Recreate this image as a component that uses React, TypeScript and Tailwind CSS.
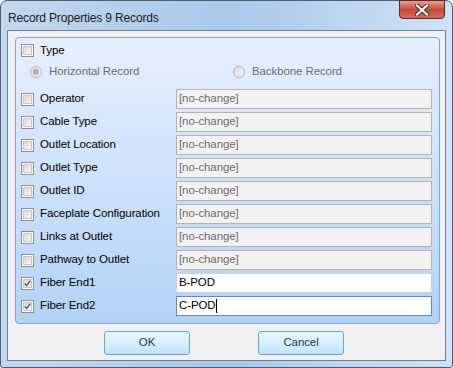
import React from "react";

const font = { fontFamily: '"Liberation Sans", Arial, sans-serif' };

function Check({ checked }: { checked?: boolean }) {
  return (
    <div className="w-[13px] h-[13px] shrink-0 border border-[#8f8f8f] bg-white p-[1px]">
      <div className="w-full h-full bg-gradient-to-br from-[#d9d9d9] to-[#f5f5f5] border border-[#c7c7c7] flex items-center justify-center">
        {checked && (
          <svg width="9" height="9" viewBox="0 0 9 9">
            <path d="M1 4.5 L3.5 7 L8 1" fill="none" stroke="#4b5f98" strokeWidth="1.8" />
          </svg>
        )}
      </div>
    </div>
  );
}

function Radio({ dot }: { dot?: boolean }) {
  return (
    <div className="w-[12px] h-[12px] shrink-0 rounded-full border border-[#b6b6b6] bg-gradient-to-br from-[#dcdcdc] to-[#f4f4f4] flex items-center justify-center">
      {dot && <div className="w-[6px] h-[6px] rounded-full bg-gradient-to-br from-[#9a9a9a] to-[#c4c4c4]" />}
    </div>
  );
}

const rows: { label: string; value: string; checked?: boolean; focus?: boolean }[] = [
  { label: "Operator", value: "[no-change]" },
  { label: "Cable Type", value: "[no-change]" },
  { label: "Outlet Location", value: "[no-change]" },
  { label: "Outlet Type", value: "[no-change]" },
  { label: "Outlet ID", value: "[no-change]" },
  { label: "Faceplate Configuration", value: "[no-change]" },
  { label: "Links at Outlet", value: "[no-change]" },
  { label: "Pathway to Outlet", value: "[no-change]" },
  { label: "Fiber End1", value: "B-POD", checked: true },
  { label: "Fiber End2", value: "C-POD", checked: true, focus: true },
];

export default function App() {
  return (
    <div style={font} className="w-[453px] h-[368px] text-[11.5px] tracking-[-0.1px] text-black">
      <div className="w-[453px] h-[368px] flex flex-col rounded-t-[7px] rounded-b-[3px] border border-[#4f5d6e] bg-gradient-to-r from-[#c3d8ee] via-[#a9c8ea] to-[#cfe2f5]">
        <div className="h-[29px] shrink-0 flex items-start">
          <div className="pl-[7px] pt-[8px] text-[12px] tracking-[-0.15px] text-[#1b1b1b]">Record Properties 9 Records</div>
          <div className="ml-auto mr-[7px] w-[46px] h-[19px] -mt-[1px] rounded-b-[4px] border border-[#5a2a2a] bg-gradient-to-b from-[#e3a192] via-[#c8473a] to-[#d56b58] flex items-center justify-center">
            <svg width="14" height="12" viewBox="0 0 14 12">
              <path d="M2 1.5 L12 10.5 M12 1.5 L2 10.5" stroke="#3f2a2a" strokeWidth="4" strokeLinecap="square" />
              <path d="M2 1.5 L12 10.5 M12 1.5 L2 10.5" stroke="#ffffff" strokeWidth="2.2" strokeLinecap="square" />
            </svg>
          </div>
        </div>
        <div className="mx-[6px] mb-[6px] flex-1 border border-[#6e819a] bg-[#f0f0f0] flex flex-col">
          <div className="mt-[6px] ml-[7px] mr-[5px] h-[287px] rounded-[4px] border border-[#7fa6d6] bg-gradient-to-b from-[#e6f0fd] to-[#b3d2f7] pl-[5px] pr-[7px] pt-[6px] flex flex-col">
            <div className="h-[13px] flex items-center gap-[6px]">
              <Check />
              <span>Type</span>
            </div>
            <div className="h-[13px] mt-[8px] flex items-center text-[#6d6d6d]">
              <div className="ml-[9px] flex items-center gap-[7px] w-[203px]">
                <Radio dot />
                <span>Horizontal Record</span>
              </div>
              <div className="flex items-center gap-[7px]">
                <Radio />
                <span>Backbone Record</span>
              </div>
            </div>
            <div className="mt-[11px] flex flex-col gap-[3px]">
              {rows.map((r) => (
                <div key={r.label} className="h-[20px] flex items-center">
                  <div className="w-[155px] flex items-center gap-[6px]">
                    <Check checked={r.checked} />
                    <span>{r.label}</span>
                  </div>
                  <div
                    className={
                      "flex-1 h-[20px] flex items-center pl-[2px] border " +
                      (r.checked
                        ? r.focus
                          ? "bg-white border-[#5b8fc1] text-black"
                          : "bg-white border-[#c5cdd8] text-black"
                        : "bg-[#f2f2f2] border-[#b3b3b3] text-[#6d6d6d]")
                    }
                  >
                    <span>{r.value}</span>
                    {r.focus && <span className="w-[1px] h-[14px] bg-black" />}
                  </div>
                </div>
              ))}
            </div>
          </div>
          <div className="mt-[7px] flex pl-[96px] gap-[68px]">
            <button className="w-[86px] h-[24px] rounded-[3px] border border-[#6fa2d6] bg-gradient-to-b from-[#e9f5fd] via-[#d8eefc] to-[#bfe2fb] text-[#223a5e]">OK</button>
            <button className="w-[86px] h-[24px] rounded-[3px] border border-[#6fa2d6] bg-gradient-to-b from-[#e9f5fd] via-[#d8eefc] to-[#bfe2fb] text-[#223a5e]">Cancel</button>
          </div>
        </div>
      </div>
    </div>
  );
}
